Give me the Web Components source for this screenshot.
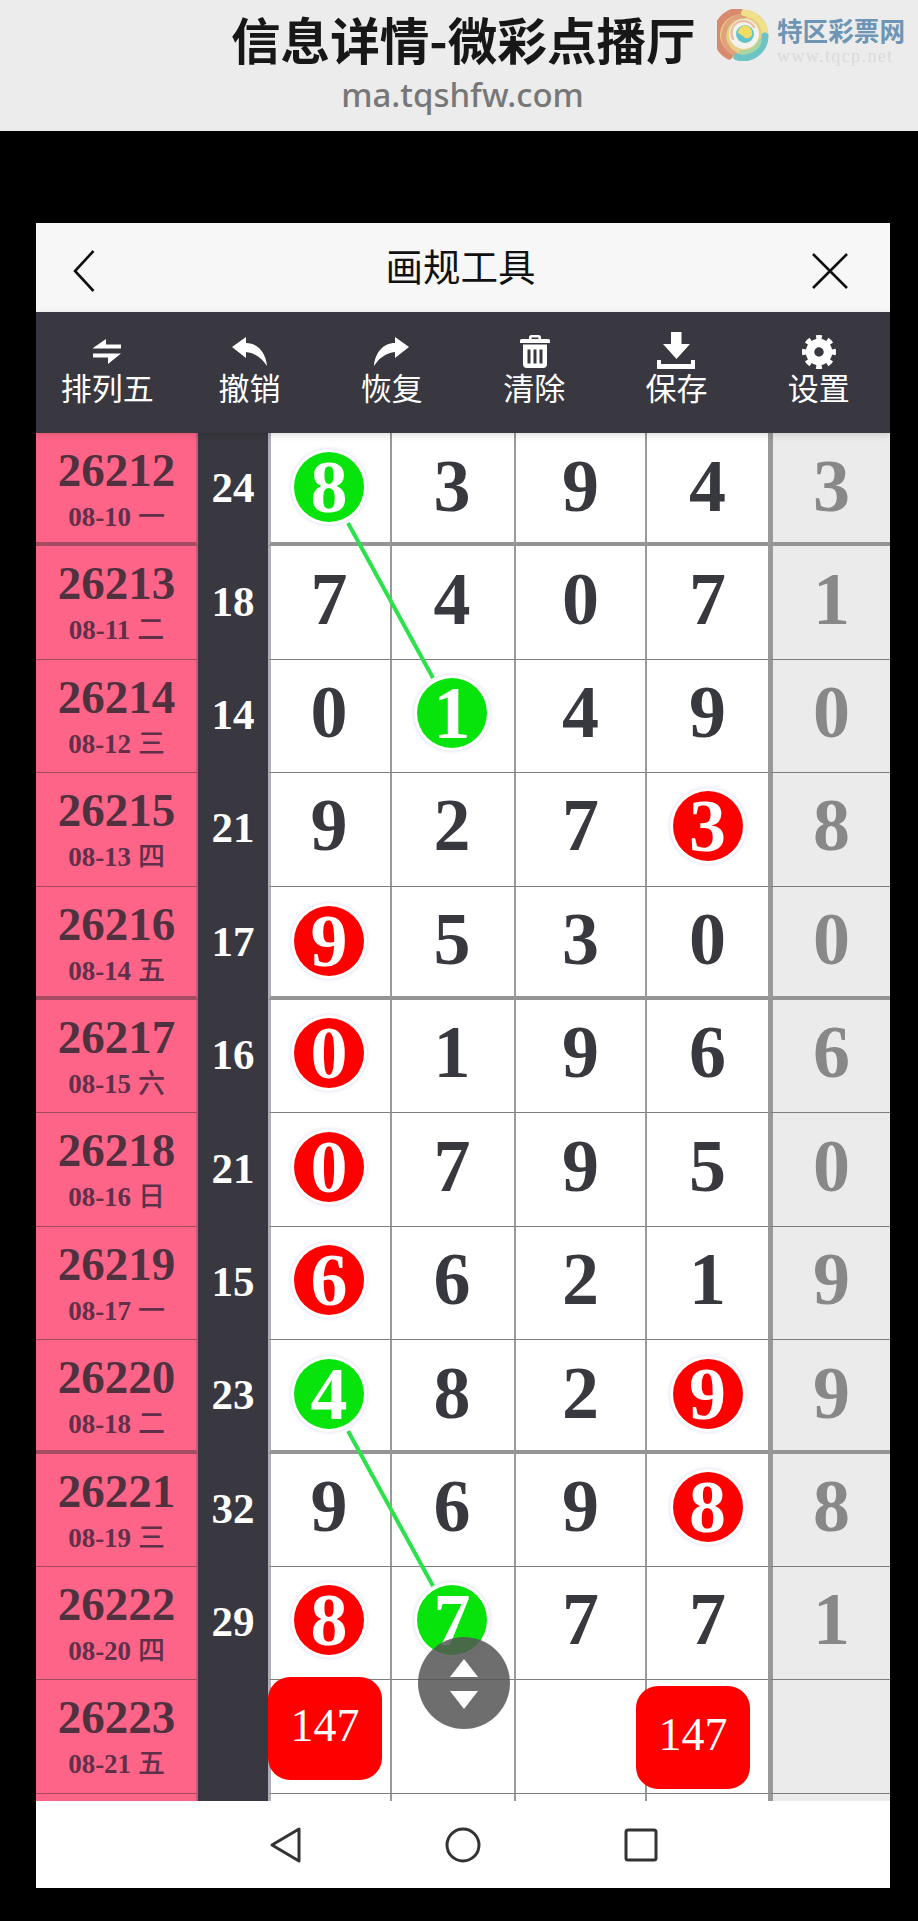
<!DOCTYPE html>
<html lang="zh">
<head>
<meta charset="utf-8">
<title>画规工具</title>
<style>
    html, body { margin: 0; padding: 0; background: #000; }
    body { font-family: "Noto Sans CJK SC", sans-serif; }
</style>
</head>
<body>
<site-header heading="信息详情-微彩点播厅" url="ma.tqshfw.com"></site-header>
<tool-window>
    <tool-title>画规工具</tool-title>
    <tool-bar>
        <tool-button icon="swap">排列五</tool-button>
        <tool-button icon="undo">撤销</tool-button>
        <tool-button icon="redo">恢复</tool-button>
        <tool-button icon="trash">清除</tool-button>
        <tool-button icon="save">保存</tool-button>
        <tool-button icon="gear">设置</tool-button>
    </tool-bar>
    <lot-chart></lot-chart>
    <nav-bar></nav-bar>
</tool-window>

<script>
class SiteHeader extends HTMLElement {
    constructor() {
        super();
        this.attachShadow({ mode: 'open' });
    }

    connectedCallback() {
        this.shadowRoot.innerHTML = `
            <style>
                :host {
                    display: grid;
                    grid-template-columns: 231px 463px 1fr;
                    grid-template-rows: 76px 44px;
                    height: 131px;
                    box-sizing: border-box;
                    background: #ececec;
                    font-family: "Noto Sans CJK SC", sans-serif;
                }
                .title {
                    grid-column: 2;
                    font-size: 49.6px;
                    font-weight: 700;
                    line-height: 76px;
                    color: #171717;
                    white-space: nowrap;
                    text-align: center;
                }
                .url {
                    grid-column: 2;
                    grid-row: 2;
                    font-family: "Noto Sans", sans-serif;
                    font-size: 33px;
                    font-weight: 500;
                    line-height: 44px;
                    margin-top: -3px;
                    color: #777;
                    text-align: center;
                }
                .logo {
                    grid-column: 3;
                    grid-row: 1;
                    display: flex;
                    align-items: flex-start;
                    gap: 8px;
                    margin-left: 23px;
                    padding-top: 9px;
                }
                .swirl {
                    width: 52px;
                    height: 52px;
                    flex: none;
                }
                svg { display: block; }
                .brand { display: flex; flex-direction: column; padding-top: 6px; }
                .cn {
                    font-size: 25.6px;
                    font-weight: 700;
                    line-height: 30px;
                    color: #6f95b5;
                    white-space: nowrap;
                }
                .en {
                    font-family: "Liberation Serif", serif;
                    font-size: 18px;
                    line-height: 18px;
                    margin-top: 2px;
                    letter-spacing: 1.4px;
                    color: #dadada;
                    white-space: nowrap;
                }
            </style>
            <div class="title">${this.getAttribute('heading')}</div>
            <div class="url">${this.getAttribute('url')}</div>
            <div class="logo">
                <svg class="swirl" viewBox="0 0 52 52" fill="none" stroke-linecap="round">
                    <circle cx="26" cy="26" r="25.5" fill="#e8cf86"/>
                    <path d="M12 47 A24 24 0 0 1 22 2" stroke="#d98a6e" stroke-width="7"/>
                    <path d="M18 45 A20 20 0 0 1 27 7" stroke="#e0a27c" stroke-width="5"/>
                    <path d="M27 4 A22 22 0 0 1 48 24" stroke="#efe08a" stroke-width="6"/>
                    <path d="M48 27 A22 22 0 0 1 20 48" stroke="#6cc4c6" stroke-width="7"/>
                    <path d="M43 32 A17 17 0 0 1 24 43" stroke="#a7d6a0" stroke-width="4"/>
                    <circle cx="27" cy="25" r="15" fill="#f3f3ee"/>
                    <path d="M16 30 A12 12 0 0 1 37 18" stroke="#e9c0a0" stroke-width="2.5"/>
                    <circle cx="28" cy="25" r="9" fill="#62c4c8"/>
                    <path d="M21 24 A7 7 0 0 1 35 23 A5 5 0 0 1 26 27 Z" fill="#f2dc62"/>
                </svg>
                <div class="brand">
                    <span class="cn">特区彩票网</span>
                    <span class="en">www.tqcp.net</span>
                </div>
            </div>
        `;
    }
}

class ToolWindow extends HTMLElement {
    constructor() {
        super();
        this.attachShadow({ mode: 'open' });
        this.shadowRoot.innerHTML = `
            <style>
                :host {
                    display: flex;
                    flex-direction: column;
                    width: 854px;
                    margin: 92px 0 33px 36px;
                }
            </style>
            <slot></slot>
        `;
    }
}

class ToolTitle extends HTMLElement {
    constructor() {
        super();
        this.attachShadow({ mode: 'open' });
        this.shadowRoot.innerHTML = `
            <style>
                :host {
                    display: grid;
                    grid-template-columns: 1fr auto 1fr;
                    align-items: center;
                    height: 89px;
                    padding: 0 42px 0 37px;
                    background: #f7f7f7;
                    color: #111;
                    font-size: 37.5px;
                }
                .title { margin-bottom: 7px; }
                svg { display: block; margin-top: 7px; }
                .close { justify-self: end; }
            </style>
            <svg width="22" height="42" viewBox="0 0 22 42" fill="none" stroke="#111" stroke-width="2.6">
                <path d="M20.5 1 L2 21 L20.5 41"/>
            </svg>
            <div class="title"><slot></slot></div>
            <svg class="close" width="36" height="36" viewBox="0 0 36 36" fill="none" stroke="#111" stroke-width="2.6">
                <path d="M1 1 L35 35 M35 1 L1 35"/>
            </svg>
        `;
    }
}

class ToolBar extends HTMLElement {
    constructor() {
        super();
        this.attachShadow({ mode: 'open' });
        this.shadowRoot.innerHTML = `
            <style>
                :host {
                    display: flex;
                    height: 121px;
                    background: #393840;
                    position: relative;
                    z-index: 1;
                    box-shadow: 0 2px 7px rgba(0, 0, 0, 0.14);
                }
            </style>
            <slot></slot>
        `;
    }
}

const TOOL_ICONS = {
    swap: `<path d="M6 17 L19 8 V13.5 H34 V17.5 H6Z M6 22.5 H34 L21 33 V26.5 H6Z"/>`,
    undo: `<path d="M3 16 L17 6 V12 C29 12 37 22 38 35 C33 27 26 22 17 21 V27 Z"/>`,
    redo: `<path transform="translate(40 0) scale(-1 1)" d="M3 16 L17 6 V12 C29 12 37 22 38 35 C33 27 26 22 17 21 V27 Z"/>`,
    trash: `<path d="M15 8 V6.5 A2.5 2.5 0 0 1 17.5 4 H24.5 A2.5 2.5 0 0 1 27 6.5 V8 H34.5 A1.5 1.5 0 0 1 36 9.5 V12 H6 V9.5 A1.5 1.5 0 0 1 7.5 8 Z M17.5 8 H24.5 V6.5 H17.5 Z" fill-rule="evenodd"/>
            <path fill-rule="evenodd" d="M9 13.5 H33 V33 A4 4 0 0 1 29 37 H13 A4 4 0 0 1 9 33 Z M13.5 18.5 V32.5 H16.5 V18.5 Z M19.5 18.5 V32.5 H22.5 V18.5 Z M25.5 18.5 V32.5 H28.5 V18.5 Z"/>`,
    save: `<path d="M15 1 H25.5 V13 H34 L20.5 28 L7 13 H15 Z M1 29 H5 V33 H35 V29 H39 V38 H1 Z"/>`,
    gear: `<g fill="none" stroke="#fff">
                <circle cx="20" cy="21" r="9" stroke-width="8.5"/>
                <circle cx="20" cy="21" r="14.5" stroke-width="5" pathLength="80" stroke-dasharray="5 5" stroke-dashoffset="2.5"/>
            </g>`
};

class ToolButton extends HTMLElement {
    constructor() {
        super();
        this.attachShadow({ mode: 'open' });
    }

    connectedCallback() {
        this.shadowRoot.innerHTML = `
            <style>
                :host {
                    flex: 1;
                    display: flex;
                    flex-direction: column;
                    align-items: center;
                    padding-top: 19px;
                    color: #fff;
                    font-size: 31px;
                    line-height: 38px;
                }
                svg { display: block; fill: #fff; margin-bottom: -3px; }
            </style>
            <svg width="40" height="40" viewBox="0 0 40 40">${TOOL_ICONS[this.getAttribute('icon')]}</svg>
            <slot></slot>
        `;
    }
}

class LotBall extends HTMLElement {
    constructor() {
        super();
        this.attachShadow({ mode: 'open' });
        this.shadowRoot.innerHTML = `
            <style>
                :host {
                    display: flex;
                    align-items: center;
                    justify-content: center;
                    width: 70px;
                    height: 70px;
                    border-radius: 50%;
                    color: #fff;
                    background: #f00;
                    box-shadow: 0 0 0 3px #fff, 0 0 3px 4px rgba(205, 210, 235, 0.55);
                }
                :host([color="green"]) { background: #07e40b; }
            </style>
            <slot></slot>
        `;
    }
}

class LotRow extends HTMLElement {
    constructor() {
        super();
        this.attachShadow({ mode: 'open' });
    }

    // balls are written as 8g or 3r, plain digits as 8
    cell(value, cls) {
        const color = value[1] === 'g' ? 'green' : 'red';
        const inner = value.length > 1
            ? `<lot-ball color="${color}">${value[0]}</lot-ball>`
            : value;
        const ball = value.length > 1 ? ' has-ball' : '';
        return `<div class="cell ${cls}${ball}">${inner}</div>`;
    }

    connectedCallback() {
        const nums = (this.getAttribute('nums') || '').split(' ');
        const filled = nums.length === 5;
        this.shadowRoot.innerHTML = `
            <style>
                :host {
                    display: grid;
                    grid-template-columns: 162px 70px 122px 124px 131px 123px 122px;
                    height: 113.4px;
                    font-family: "Liberation Serif", "Noto Sans CJK SC", serif;
                    font-weight: 700;
                }
                .issue {
                    display: flex;
                    flex-direction: column;
                    align-items: center;
                    background: #fe6487;
                    color: #4f3140;
                    border-bottom: 1px solid #a24a60;
                    border-right: 2px solid #c8597a;
                    box-sizing: border-box;
                    padding: 10px 0 0 1px;
                }
                .issue b { font-size: 47px; line-height: 54px; }
                .issue span { font-size: 27px; line-height: 34px; margin-top: 1px; color: #60304a; white-space: nowrap; }
                .issue em { font-family: "Noto Sans CJK SC", sans-serif; font-style: normal; font-weight: 500; font-size: 27px; }
                .sum {
                    display: flex;
                    align-items: center;
                    justify-content: center;
                    background: #393840;
                    color: #fff;
                    font-size: 43px;
                    padding-bottom: 4px;
                    box-sizing: border-box;
                }
                .cell {
                    display: flex;
                    align-items: center;
                    justify-content: center;
                    box-sizing: border-box;
                    background: #fff;
                    color: #38383f;
                    font-size: 74px;
                    line-height: 1;
                    padding-bottom: 8px;
                    border-left: 2px solid #999;
                    border-bottom: 1px solid #7d7d7d;
                }
                .cell.has-ball { padding-bottom: 6px; }
                .c1 { border-left: 3px solid #aeaebb; padding-right: 3px; }
                .c2 { padding-right: 2px; }
                .c5 { border-left: 5px solid #999; background: #ebebeb; color: #888; }
                :host(.thick) .cell { border-bottom: 4px solid #949494; padding-bottom: 4px; }
                :host(.thick) .cell.has-ball { padding-bottom: 1px; }
                :host(.thick) .issue { border-bottom: 4px solid #a74d63; }
            </style>
            <div class="issue">
                <b>${this.getAttribute('issue') || ''}</b>
                <span>${this.getAttribute('date') || ''} <em>${this.getAttribute('day') || ''}</em></span>
            </div>
            <div class="sum">${this.getAttribute('sum') || ''}</div>
            ${filled
                ? nums.map((n, i) => this.cell(n, 'c' + (i + 1))).join('')
                : [1, 2, 3, 4, 5].map(i => `<div class="cell c${i}"></div>`).join('')}
        `;
    }
}

class LotBadge extends HTMLElement {
    constructor() {
        super();
        this.attachShadow({ mode: 'open' });
        this.shadowRoot.innerHTML = `
            <style>
                :host {
                    position: absolute;
                    display: flex;
                    align-items: center;
                    justify-content: center;
                    width: 114px;
                    height: 103px;
                    border-radius: 22px;
                    background: #f00;
                    color: #fff;
                    font-family: "Liberation Serif", serif;
                    font-size: 46px;
                    padding-bottom: 6px;
                    box-sizing: border-box;
                }
            </style>
            <slot></slot>
        `;
    }
}

class ScrollFab extends HTMLElement {
    constructor() {
        super();
        this.attachShadow({ mode: 'open' });
        this.shadowRoot.innerHTML = `
            <style>
                :host {
                    position: absolute;
                    display: block;
                    width: 92px;
                    height: 92px;
                    border-radius: 50%;
                    background: rgba(85, 85, 85, 0.85);
                }
                svg { display: block; }
            </style>
            <svg width="92" height="92" viewBox="0 0 92 92" fill="#fff">
                <path d="M32 40 L46 22 L60 40 Z"/>
                <path d="M32 54 H60 L46 72 Z"/>
            </svg>
        `;
    }
}

class LotChart extends HTMLElement {
    constructor() {
        super();
        this.attachShadow({ mode: 'open' });
    }

    connectedCallback() {
        const rows = [
            ['26212', '08-10', '一', '24', '8g 3 9 4 3', true],
            ['26213', '08-11', '二', '18', '7 4 0 7 1'],
            ['26214', '08-12', '三', '14', '0 1g 4 9 0'],
            ['26215', '08-13', '四', '21', '9 2 7 3r 8'],
            ['26216', '08-14', '五', '17', '9r 5 3 0 0', true],
            ['26217', '08-15', '六', '16', '0r 1 9 6 6'],
            ['26218', '08-16', '日', '21', '0r 7 9 5 0'],
            ['26219', '08-17', '一', '15', '6r 6 2 1 9'],
            ['26220', '08-18', '二', '23', '4g 8 2 9r 9', true],
            ['26221', '08-19', '三', '32', '9 6 9 8r 8'],
            ['26222', '08-20', '四', '29', '8r 7g 7 7 1'],
            ['26223', '08-21', '五', '', ''],
            ['', '', '', '', '']
        ];
        const html = rows.map(r => `
            <lot-row class="${r[5] ? 'thick' : ''}" issue="${r[0]}" date="${r[1]}" day="${r[2]}" sum="${r[3]}" nums="${r[4]}"></lot-row>
        `).join('');

        this.shadowRoot.innerHTML = `
            <style>
                :host {
                    display: block;
                    position: relative;
                    height: 1368px;
                    overflow: hidden;
                    background: #fff;
                }
                svg.lines { position: absolute; left: 0; top: 0; pointer-events: none; }
                .b1 { left: 232px; top: 1244px; }
                .b2 { left: 600px; top: 1253px; }
                scroll-fab { left: 382px; top: 1204px; }
            </style>
            ${html}
            <svg class="lines" width="854" height="1368" fill="none" stroke="#2be24a" stroke-width="4">
                <path d="M312 90 L397 245 M312 998 L397 1153"/>
            </svg>
            <lot-badge class="b1">147</lot-badge>
            <lot-badge class="b2">147</lot-badge>
            <scroll-fab></scroll-fab>
        `;
    }
}

class NavBar extends HTMLElement {
    constructor() {
        super();
        this.attachShadow({ mode: 'open' });
        this.shadowRoot.innerHTML = `
            <style>
                :host {
                    display: flex;
                    justify-content: center;
                    align-items: center;
                    gap: 142px;
                    height: 87px;
                    background: #fff;
                    padding-right: 1px;
                }
                svg { display: block; }
            </style>
            <svg width="36" height="38" viewBox="0 0 36 38" fill="none" stroke="#333" stroke-width="3" stroke-linejoin="round">
                <path d="M32 3 V35 L5 19 Z"/>
            </svg>
            <svg width="36" height="36" viewBox="0 0 36 36" fill="none" stroke="#333" stroke-width="3">
                <circle cx="18" cy="18" r="16"/>
            </svg>
            <svg width="36" height="36" viewBox="0 0 36 36" fill="none" stroke="#333" stroke-width="3" stroke-linejoin="round">
                <rect x="3" y="3" width="30" height="30" rx="2"/>
            </svg>
        `;
    }
}

customElements.define('site-header', SiteHeader);
customElements.define('tool-window', ToolWindow);
customElements.define('tool-title', ToolTitle);
customElements.define('tool-bar', ToolBar);
customElements.define('tool-button', ToolButton);
customElements.define('lot-ball', LotBall);
customElements.define('lot-row', LotRow);
customElements.define('lot-badge', LotBadge);
customElements.define('scroll-fab', ScrollFab);
customElements.define('lot-chart', LotChart);
customElements.define('nav-bar', NavBar);
</script>
</body>
</html>
